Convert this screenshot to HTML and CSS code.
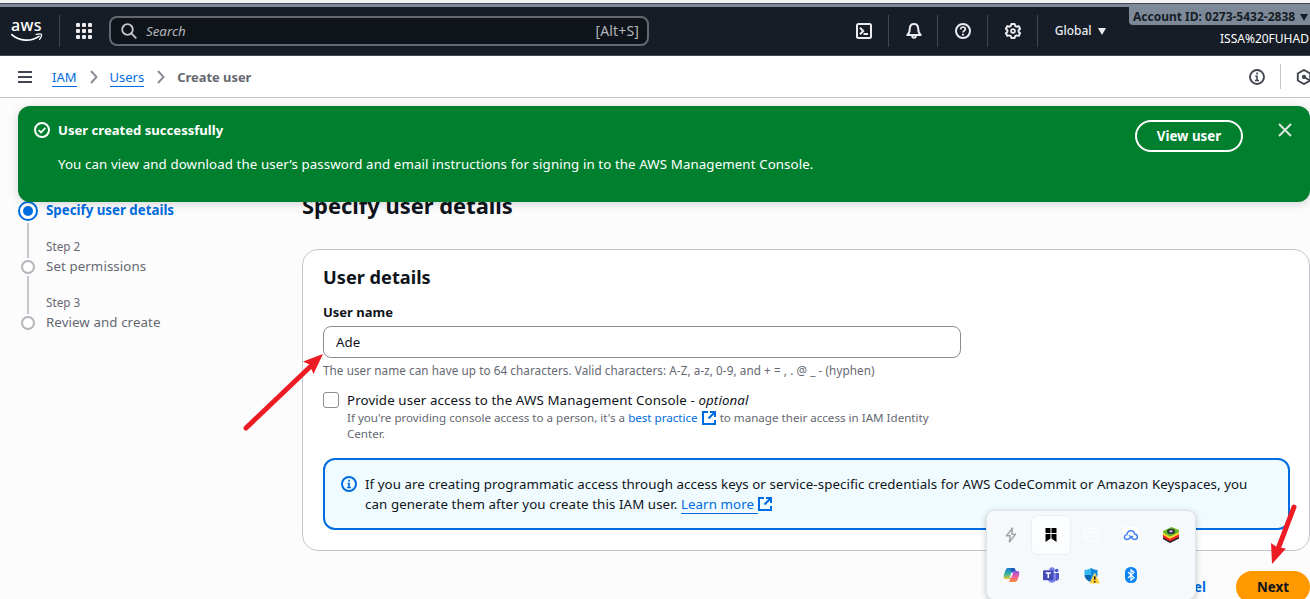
FILE: index.html
```html
<!DOCTYPE html>
<html lang="en">
<head>
<meta charset="utf-8">
<title>Create user | IAM</title>
<link rel="stylesheet" href="styles.css">
</head>
<body>
<div class="page">
  <div class="window-edge"></div>
  <header class="topnav">
    <a class="logo">
      <span class="logo-text">aws</span>
      <svg width="32" height="9" viewBox="0 12 32 9"><path d="M.8 13.6C8.500 20.600 20 20.800 28 15.400" fill="none" stroke="#fff" stroke-width="1.700" stroke-linecap="round"/><path d="M25.200 13.300C27.500 12.700 29.800 12.700 30.400 13.400S30 16.800 28.600 18.300" fill="none" stroke="#fff" stroke-width="1.300" stroke-linecap="round"/></svg>
    </a>
    <span class="apps"><i></i><i></i><i></i><i></i><i></i><i></i><i></i><i></i><i></i></span>
    <div class="search">
      <svg width="16" height="16" viewBox="0 0 16 16" fill="none" stroke="#c6c6cd" stroke-width="1.800"><circle cx="6.500" cy="6.500" r="5.300"/><path d="M10.300 10.300l5 5"/></svg>
      <span class="search-hint">Search</span><span class="search-key">[Alt+S]</span>
    </div>
    <nav class="tools">
      <span class="tool"><svg width="18" height="18" viewBox="0 0 18 18" fill="none" stroke="#ebebf0" stroke-width="2"><rect x="2" y="2" width="14" height="14" rx="1.500"/><path d="M5 5.800l3.200 3.200L5 12.200M8.500 12h4.500"/></svg></span>
      <span class="tool"><svg width="18" height="18" viewBox="0 0 18 18" fill="none" stroke="#ebebf0" stroke-width="2" stroke-linejoin="round"><path d="M2.300 13h13.400c-2-1.800-2.500-3.200-2.500-6.200C13.200 4 11.500 2 9 2S4.800 4 4.800 6.800c0 3-.5 4.400-2.500 6.200z"/><path d="M7.200 13.800c0 2.700 3.600 2.700 3.600 0"/></svg></span>
      <span class="tool"><svg width="18" height="18" viewBox="0 0 18 18" fill="none" stroke="#ebebf0" stroke-width="2"><circle cx="9" cy="9" r="7"/><path d="M6.600 7.600C6.500 4 11.600 4.300 11.300 7.300 11.100 8.800 9 8.700 9 10.600" stroke-width="1.700"/><path d="M9 11.700v1.800"/></svg></span>
      <span class="tool"><svg width="18" height="18" viewBox="0 0 18 18" fill="none" stroke="#ebebf0" stroke-width="2" stroke-linejoin="round"><path d="M7.400 2h3.200l.6 2 1.400.7 2-.6 1.500 2.700-1.500 1.500v1.400l1.500 1.500-1.500 2.700-2-.5-1.400.7-.6 1.900H7.400l-.6-1.900-1.400-.7-2 .5-1.500-2.700 1.500-1.500V8.300L1.900 6.800l1.500-2.700 2 .6L6.800 4z"/><circle cx="9" cy="9" r="1.900" stroke-width="1.800"/></svg></span>
      <span class="region">Global<b class="caret"></b></span>
    </nav>
    <div class="account">
      <div class="account-id"><span>Account ID: 0273-5432-2838</span><b class="caret dark"></b></div>
      <div class="account-name"><span>ISSA%20FUHAD</span></div>
    </div>
  </header>

  <div class="crumbs">
    <span class="burger"><i></i><i></i><i></i></span>
    <a class="crumb-link iam">IAM</a>
    <svg class="chev" width="8" height="14" viewBox="0 0 8 14"><path d="M1 1l5.500 6L1 13"/></svg>
    <a class="crumb-link users">Users</a>
    <svg class="chev" width="8" height="14" viewBox="0 0 8 14"><path d="M1 1l5.500 6L1 13"/></svg>
    <span class="crumb-here">Create user</span>
    <div class="panel-tools">
      <svg width="16" height="16" viewBox="0 0 16 16" fill="none" stroke="#424650" stroke-width="1.900"><circle cx="8" cy="8" r="7"/><path d="M8 3.500v2M6.300 7.300H8V11M6 11.500h4" stroke-width="1.600"/></svg>
      <span class="panel-sep"></span>
      <svg width="16" height="16" viewBox="0 0 16 16" fill="none" stroke="#424650" stroke-width="1.900"><path d="M8 1l6.200 3.500v7L8 15l-6.200-3.500v-7z"/><circle cx="8" cy="8" r="1.200" fill="#424650"/><path d="M8 8l6 3.500"/></svg>
    </div>
  </div>

  <main class="main">
    <aside class="wizard">
      <div class="rail">
        <svg width="20" height="20" viewBox="0 0 20 20"><circle cx="10" cy="10" r="9" fill="#fff" stroke="#006ce0" stroke-width="2"/><circle cx="10" cy="10" r="5" fill="#006ce0"/></svg>
        <i class="line first"></i>
        <b class="dot"></b>
        <i class="line second"></i>
        <b class="dot"></b>
      </div>
      <div class="steps">
        <div class="step-name active"><span>Specify user details</span></div>
        <div class="step-no">Step 2</div>
        <div class="step-name">Set permissions</div>
        <div class="step-no">Step 3</div>
        <div class="step-name last">Review and create</div>
      </div>
    </aside>
    <section class="content">
      <h1><span>Specify user details</span></h1>
      <div class="card">
        <h2><span>User details</span></h2>
        <label class="field-label"><span>User name</span></label>
        <div class="input"><span>Ade</span></div>
        <p class="hint"><span>The user name can have up to 64 characters. Valid characters: A-Z, a-z, 0-9, and + = , . @ _ - (hyphen)</span></p>
        <div class="option">
          <span class="checkbox"></span>
          <div>
            <div class="option-label"><span>Provide user access to the AWS Management Console - <em>optional</em></span></div>
            <div class="option-desc"><span>If you're providing console access to a person, it's a <a>best practice</a> <svg class="ext" width="14" height="14" viewBox="0 0 14 14"><path d="M6 1H1v12h12V9M8 1h5v5M13 1L6.500 7.500"/></svg> to manage their access in IAM Identity</span><br>Center.</div>
          </div>
        </div>
        <div class="info">
          <svg width="16" height="16" viewBox="0 0 16 16" fill="none" stroke="#006ce0" stroke-width="2"><circle cx="8" cy="8" r="7"/><path d="M8 3.800v1.900M6.500 7.500H8V11M6 11.500h4" stroke-width="1.600"/></svg>
          <div class="info-text"><span class="l1">If you are creating programmatic access through access keys or service-specific credentials for AWS CodeCommit or Amazon Keyspaces, you</span><br><span class="l2">can generate them after you create this IAM user. <a>Learn more </a><svg class="ext" width="14" height="14" viewBox="0 0 14 14"><path d="M6 1H1v12h12V9M8 1h5v5M13 1L6.500 7.500"/></svg></span></div>
        </div>
      </div>
      <div class="actions"><a class="cancel">Cancel</a><button class="next">Next</button></div>
    </section>
  </main>

  <div class="flash">
    <svg class="flash-icon" width="16" height="16" viewBox="0 0 16 16" fill="none" stroke="#fff" stroke-width="2"><circle cx="8" cy="8" r="7"/><path d="M4.600 8.200l2.400 2.300 4.300-4.700" stroke-width="1.800"/></svg>
    <div class="flash-body">
      <div class="flash-title"><span>User created successfully</span></div>
      <div class="flash-text"><span>You can view and download the user’s password and email instructions for signing in to the AWS Management Console.</span></div>
    </div>
    <button class="view-user">View user</button>
    <svg class="close" width="14" height="14" viewBox="0 0 14 14" fill="none" stroke="#dfe9e1" stroke-width="1.900"><path d="M1 1l12 12M13 1L1 13"/></svg>
  </div>

  <svg class="marks" width="1310" height="599" viewBox="0 0 1310 599">
    <g fill="#ed1c24" stroke="#ed1c24">
      <path d="M246 428L311 366" stroke-width="5" stroke-linecap="round"/>
      <path d="M323 354L303 361.500L309.500 364.500L313.500 374z" stroke="none"/>
    </g>
  </svg>

  <div class="tray">
    <span class="tile"><svg width="16" height="16" viewBox="0 0 16 16" fill="none" stroke="#a3a5a8" stroke-width="1.500" stroke-linejoin="round"><path d="M9.500 1L3.500 8.800h3.700L6.400 15 12.500 7.200H8.800z"/></svg></span>
    <span class="tile on"><svg width="12" height="16" viewBox="0 0 12 16"><path d="M.5 1h5v5h-5zM6.500 1h5v5h-5zM.5 7h5v4.500L.5 15zM6.500 7h5v8l-5-3.500z"/></svg></span>
    <span class="tile"><svg width="16" height="16" viewBox="0 0 16 16" fill="none" stroke="#fff"><path d="M5 5.500h9.500v9H5zM4 10.500H1.500v-9h9V5"/></svg></span>
    <span class="tile"><svg width="16" height="16" viewBox="0 0 16 16"><path fill="#fff" d="M0 0h16v16H0z"/><path d="M4 12.500C.5 12.300.6 7.800 4 7.600 4.500 2.400 11 2.700 11.500 7c4 .3 3.800 5.500 0 5.500-2.500 0-3.200-2.800-5.200-3.800M4 12.500c3 .2 3.200-3.500 5.400-3" fill="none" stroke="#3f7ff0" stroke-width="1.400" stroke-linecap="round"/></svg></span>
    <span class="tile"><svg width="18" height="18" viewBox="0 0 18 18"><path fill="#17191d" d="M1 10.500l7 4 9-4v2l-9 4.500-7-4z"/><path fill="#e8232a" d="M1 8.500l7 4 9-4.500v3l-9 4.500-7-4z"/><path fill="#ffd21f" d="M1 6.500l7 4 9-4.500v2.300l-9 4.500-7-4z"/><path fill="#68b828" d="M1 5L9.500 1 17 4v2.300l-9 4.500-7-4z"/><ellipse cx="9" cy="5.500" rx="4" ry="2.700" fill="#263b32"/><ellipse cx="9" cy="5.200" rx="1.700" ry="1.200" fill="#c9a0dc"/></svg></span>
    <span class="tile"><svg width="17" height="16" viewBox="0 0 17 16"><defs><linearGradient id="ca" x2="0" y2="1"><stop stop-color="#1678d8"/><stop offset=".55" stop-color="#38b69b"/><stop offset="1" stop-color="#f2c52b"/></linearGradient><linearGradient id="cb" x2="0" y2="1"><stop stop-color="#8b55e4"/><stop offset=".5" stop-color="#ee5d9b"/><stop offset="1" stop-color="#fa8b3b"/></linearGradient></defs><path fill="url(#ca)" d="M5 1h6L7 12H2.500C0 12 .5 9 1.500 6S3 1 5 1z"/><path fill="url(#cb)" d="M10 4h4.500c2.500 0 2 3 1 6s-1.500 5-3.500 5H6z"/><path fill="#1758b8" d="M8 1h3.500L13 4h-3L8.500 8z"/><path fill="#f5f8fa" d="M8.300 5.500h1.700L8.500 10.500H6.800z"/></svg></span>
    <span class="tile"><svg width="16" height="16" viewBox="0 0 16 16"><circle cx="13.700" cy="3.500" r="1.800" fill="#5059c9"/><circle cx="9" cy="3" r="2.800" fill="#7b83eb"/><path fill="#5059c9" d="M11 6h5v5c0 2-2 3-4 2.500z"/><path fill="#7b83eb" d="M5 6h8v5.500c0 5-7 6-8 1z"/><rect y="3.200" width="10.500" height="10" rx="1" fill="#454cb5"/><path d="M2.800 6h5M5.300 6v5" stroke="#fff" stroke-width="1.500"/></svg></span>
    <span class="tile"><svg width="17" height="17" viewBox="0 0 17 17"><path fill="#1489d8" d="M8 1c2 1.300 4 2 6.500 2v5c0 3-2.500 5.500-6.500 7.500z"/><path fill="#32b9f0" d="M8 1C6 2.300 4 3 1.500 3v5H8z"/><path fill="#0767b3" d="M1.500 8H8v7.500C4 13.500 1.500 11 1.500 8z"/><path fill="#ffcb2e" stroke="#fff3bf" stroke-width=".5" d="M11.700 6L17 16.500H6.500z"/><path d="M11.700 9.300v3.500M11.700 13.900v1.500" stroke="#222" stroke-width="1.500"/></svg></span>
    <span class="tile"><svg width="12" height="16" viewBox="0 0 12 16"><rect width="12" height="16" rx="5.500" fill="#0a84f5"/><path d="M3 5l6 5.700L6 13.300V2.700l3 2.600L3 11" fill="none" stroke="#fff" stroke-width="1.200"/></svg></span>
  </div>

  <svg class="marks" width="1310" height="599" viewBox="0 0 1310 599">
    <path d="M1294 507L1278 549" stroke="#ed1c24" stroke-width="5" stroke-linecap="round"/>
    <path d="M1272 564L1271 543L1277.500 547.500L1286 548.500z" fill="#ed1c24"/>
  </svg>
</div>
</body>
</html>
```
FILE: styles.css
```css
* { box-sizing: border-box; }
body { margin: 0; }
h1, h2, p { margin: 0; }
svg { display: block; flex: none; }
.page {
  position: relative;
  width: 1310px;
  height: 599px;
  overflow: hidden;
  background: #fcfcfd;
  font-family: "Noto Sans", sans-serif;
  font-size: 13.3px;
  line-height: 20px;
  color: #0f141a;
  white-space: nowrap;
}
.window-edge { height: 7px; background: #7d8998; border-top: 3px solid #f3f3f4; box-shadow: inset 0 1px #424650; }

/* Top navigation */
.topnav { display: flex; height: 49px; background: #161d26; border-bottom: 1px solid #424650; align-items: flex-start; }
.logo { display: flex; flex-direction: column; width: 60px; height: 32px; margin-top: 8px; padding: 1px 0 0 11px; border-right: 1px solid #424650; }
.logo-text { height: 17px; line-height: 18px; font-size: 16px; font-weight: 500; letter-spacing: .3px; color: #fff; }
.apps { display: grid; grid-template-columns: repeat(3, 4px); gap: 2px; margin: 16px 0 0 16px; }
.apps i { width: 4px; height: 4px; border-radius: 1px; background: #ebebf0; }
.search { display: flex; align-items: center; width: 540px; height: 30px; margin: 9px 0 0 17px; padding: 0 8px 0 10px; border: 2px solid #656871; border-radius: 8px; background: #0f141a; color: #b4b4bb; }
.search-hint { margin-left: 9px; font-style: italic; }
.search-key { margin-left: auto; font-size: 14px; letter-spacing: .15px; }
.tools { display: flex; margin: 8px 0 0 190px; }
.tool { display: flex; align-items: center; justify-content: center; width: 49.700px; height: 32px; border-right: 1px solid #424650; padding-left: 1px; }
.region { display: flex; align-items: center; padding-left: 17px; color: #ebebf0; font-size: 12px; font-weight: 500; }
.caret { border: 4px solid transparent; border-top: 7px solid #ebebf0; border-bottom: 0; margin-left: 6px; }
.caret.dark { border-top-color: #161d26; margin-left: 5px; }
.account { margin: -3px 0 0 auto; width: 181px; flex: none; overflow: hidden; }
.account-id { display: flex; align-items: center; height: 21px; padding: 5px 0 0 4px; border-radius: 0 0 0 4px; background: #7d8998; color: #161d26; font-size: 12px; font-weight: 700; }
.account-name { padding-left: 91px; margin-top: 4px; color: #fff; font-size: 12px; }

/* Breadcrumbs */
.crumbs { display: flex; align-items: center; height: 42px; padding-left: 18px; background: #fff; border-bottom: 1px solid #c6c6cd; }
.burger { display: grid; gap: 3px; width: 14px; margin-right: 20px; }
.burger i { height: 2px; background: #424650; }
.crumb-link { color: #006ce0; border-bottom: 1px solid #006ce0; line-height: 20px; height: 20px; font-size: 13px; }
.chev { margin: 0 12px 0 13px; fill: none; stroke: #8c8c94; stroke-width: 2; }
.crumb-here { color: #656871; font-weight: 700; font-size: 12.9px; }
.panel-tools { display: flex; align-items: center; margin-left: auto; margin-right: -2px; }
.panel-sep { width: 1px; height: 25px; margin: 0 15px; background: #c6c6cd; }

/* Wizard */
.main { display: flex; padding-left: 18px; height: 501px; }
.wizard { display: flex; width: 284px; padding-top: 102px; flex: none; }
.rail { display: flex; flex-direction: column; align-items: center; width: 20px; margin: 1px 8px 0 0; }
.line { width: 2px; background: #c6c6cd; }
.line.first { height: 35px; margin: 2px 0; }
.line.second { height: 38px; margin: 2px 0; }
.dot { width: 14px; height: 14px; border: 2px solid #b4b4bb; border-radius: 50%; background: #fff; }
.steps { color: #656871; }
.step-name { height: 20px; margin-bottom: 16px; letter-spacing: .09px; }
.step-name.active { color: #006ce0; font-weight: 700; letter-spacing: 0; }
.step-no { height: 20px; font-size: 11.700px; }

/* Form */
.content { width: 1008px; flex: none; padding-top: 93px; }
h1 { font-size: 21.900px; line-height: 30px; height: 58px; }
.card { height: 302px; padding: 15px 20px 0; border: 1px solid #c6c6cd; border-radius: 16px; background: #fff; }
h2 { font-size: 18.200px; line-height: 24px; margin-bottom: 12px; }
.field-label { display: block; font-weight: 700; font-size: 13px; height: 25px; line-height: 22px; }
.input { width: 638px; height: 32px; padding: 5px 12px; border: 1px solid #8c8c94; border-radius: 8px; }
.hint { margin-top: 4px; height: 16px; line-height: 16px; font-size: 11.700px; letter-spacing: .075px; color: #656871; }
.option { display: flex; margin-top: 12px; }
.checkbox { width: 16px; height: 16px; margin: 2px 8px 0 0; border: 1px solid #8c8c94; border-radius: 3px; }
.option-label { letter-spacing: .12px; }
.option-desc { font-size: 11.600px; line-height: 16px; color: #656871; }
.option a, .info a { color: #006ce0; }
.ext { display: inline-block; vertical-align: -2px; fill: none; stroke: #006ce0; stroke-width: 2; }
.option-desc .ext { margin: -2px 1px 0; vertical-align: -3px; }
.info { display: flex; gap: 8px; width: 967px; height: 72px; margin-top: 16px; padding: 14px 16px; border: 2px solid #006ce0; border-radius: 12px; background: #f0fbff; }
.info > svg { margin-top: 2px; }
.l1 { letter-spacing: .068px; }
.l2 { letter-spacing: .095px; }
.info a { border-bottom: 1px solid #006ce0; }
.actions { display: flex; justify-content: flex-end; align-items: center; gap: 30px; margin-top: 20px; font-weight: 700; }
.cancel { color: #006ce0; }
.next { width: 74px; height: 32px; border: 0; border-radius: 16px; background: #ff9900; color: #0f141a; font: inherit; }

/* Notification over the page */
.flash { position: absolute; left: 18px; top: 106px; width: 1292px; height: 96px; display: flex; align-items: flex-start; padding: 14px 18px 0 16px; border-radius: 12px; background: #00802f; color: #fff; box-shadow: 0 2px 10px rgba(0, 7, 22, .16); }
.flash-icon { margin: 2px 8px 0 0; }
.flash-title { font-weight: 700; height: 34px; font-size: 13.1px; }
.flash-text { letter-spacing: .1px; }
.view-user { width: 108px; height: 32px; margin-left: auto; border: 2px solid #fff; border-radius: 16px; background: none; color: #fff; font: inherit; font-weight: 700; padding: 0; }
.close { margin: 3px 0 0 35px; }

/* Annotation arrows */
.marks { position: absolute; left: 0; top: 0; pointer-events: none; }

/* System tray popup */
.tray { position: absolute; left: 986px; top: 510px; width: 210px; height: 90px; display: grid; grid-template: repeat(2, 40px) / repeat(5, 40px); padding: 4px; border: 1px solid #dfe3e7; border-radius: 8px; background: #f5f9fc; box-shadow: 0 2px 6px rgba(0, 0, 0, .22); }
.tile { display: flex; align-items: center; justify-content: center; margin: 1px; border-radius: 5px; }
.tile.on { background: #fcfdfe; box-shadow: 0 0 0 1px #eceff2; }
```
